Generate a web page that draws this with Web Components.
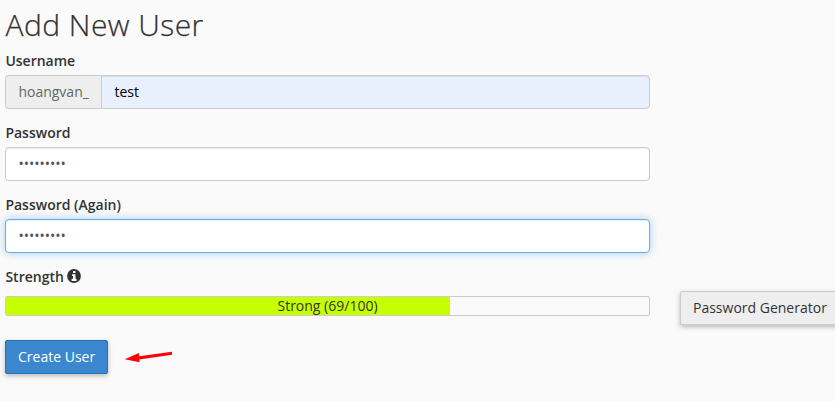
<!DOCTYPE html>
<html lang="en">
<head>
<meta charset="utf-8">
<title>Add New User</title>
<style>
html,body{margin:0;height:100%;background:#fafafa;overflow:hidden}
body{font:14px/20px "Open Sans","Noto Sans",sans-serif;color:#333}
</style>
</head>
<body>
<user-form></user-form>
<script>
const define = (name, html) => customElements.define(name, class extends HTMLElement {
  constructor() {
    super();
    this.attachShadow({mode: 'open'}).innerHTML = '<style>*{box-sizing:border-box}:host{box-sizing:border-box}</style>' + html;
  }
});

define('form-field', `<style>
:host{display:block;height:59px;margin-bottom:13px}
.label{font-weight:600;height:25px;padding:1px 0 0 .4px}
.box{display:flex;height:34px}
</style><div class="label"><slot name="label"></slot></div><div class="box"><slot></slot></div>`);

define('input-addon', `<style>
:host{display:block;flex:none;width:96px;height:34px;padding:6px 0 6px 12.4px;background:#eee;border:1px solid #ccc;border-right:0;border-radius:4px 0 0 4px;color:#666;font-weight:400;white-space:nowrap}
</style><slot></slot>`);

define('text-box', `<style>
:host{display:block;flex:1;height:34px;padding:6px 12.4px;background:#fff;border:1px solid #ccc;border-radius:4px;box-shadow:inset 0 1px 1px rgba(0,0,0,.075);color:#555}
:host([joined]){border-radius:0 4px 4px 0;background:#e8f0fe;color:#000}
:host([focused]){border-color:#66afe9;box-shadow:inset 0 1px 1px rgba(0,0,0,.075),0 0 8px rgba(102,175,233,.6)}
</style><slot></slot>`);

define('info-icon', `<style>
:host{display:inline-block;width:14px;height:14px;vertical-align:-1px}svg{display:block}
</style><svg width="14" height="14" viewBox="0 0 14 14"><circle cx="7" cy="7" r="6.9" fill="#333"/><path fill="#fafafa" d="M6 2h2.5v2H6zM5 5.2h3.5v4.6h1V12H4.600V9.800H6V7H5z"/></svg>`);

define('strength-meter', `<style>
:host{display:flex;height:20px;width:645px;border:1px solid #ccc;border-radius:2px;background:linear-gradient(#c6ff00,#c6ff00) 0 0/444px 100% no-repeat #fafafa;justify-content:center;line-height:18px}
</style><span><slot></slot></span>`);

define('push-button', `<style>
:host{display:block;flex:none;height:34px;padding:6px 12px;border:1px solid #ccc;border-radius:2px;background:#eee;color:#333;box-shadow:0 2px 5px rgba(0,0,0,.26);white-space:nowrap}
:host([primary]){width:103px;background:#3a87cf;border-color:#2a71b7;color:#fff}
</style><slot></slot>`);

define('red-arrow', `<style>:host{display:block;margin-left:16px}svg{display:block}</style>
<svg width="50" height="34" viewBox="0 0 50 34"><path fill="#f00" d="M.8 19.200 15 13v3.200L48 11.800v3L15.200 19.400l.5 2.800z"/></svg>`);

define('user-form', `<style>
:host{display:block;padding:0 0 0 5px;height:401px;overflow:hidden}
h1{font-size:30px;line-height:33px;font-weight:300;letter-spacing:.45px;margin:0;padding:8px 0 0 .5px;height:50px;-webkit-text-stroke:.25px #333}
.fields{width:645px}
.strength{font-weight:600;height:20px;padding:1px 0 0 .4px}
.meter{display:flex;align-items:flex-start;gap:30px;padding-top:5px;height:54px}
strength-meter{flex:none;margin-top:5px}
.actions{display:flex}
</style>
<h1>Add New User</h1>
<div class="fields">
<form-field><span slot="label">Username</span><input-addon>hoangvan_</input-addon><text-box joined>test</text-box></form-field>
<form-field><span slot="label">Password</span><text-box>•••••••••</text-box></form-field>
<form-field><span slot="label">Password (Again)</span><text-box focused>•••••••••</text-box></form-field>
</div>
<div class="strength">Strength <info-icon></info-icon></div>
<div class="meter"><strength-meter>Strong (69/100)</strength-meter><push-button>Password Generator</push-button></div>
<div class="actions"><push-button primary>Create User</push-button><red-arrow></red-arrow></div>`);
</script>
</body>
</html>
